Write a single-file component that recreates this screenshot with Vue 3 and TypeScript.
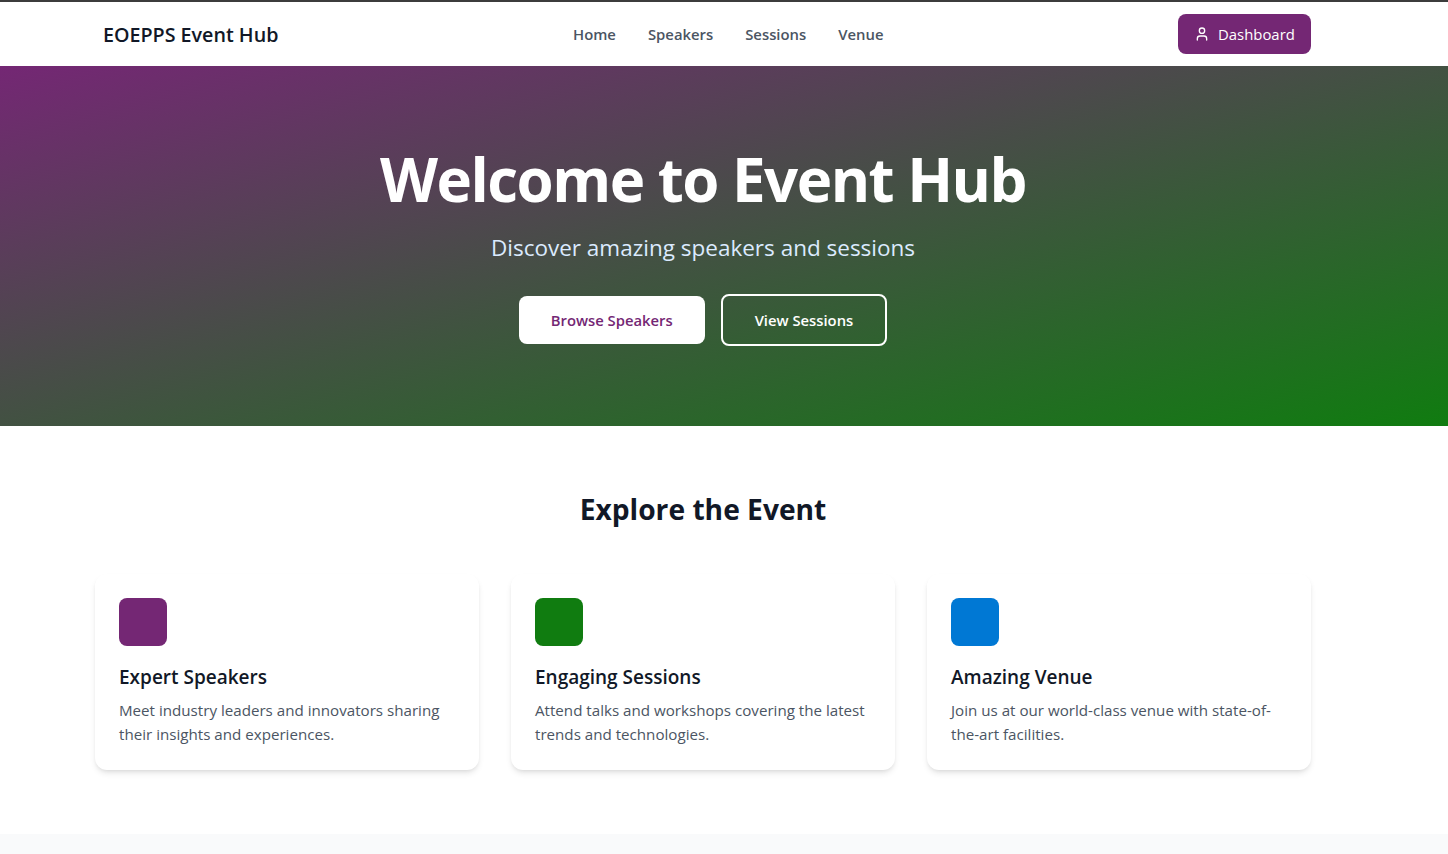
<script setup lang="ts">
interface Feature {
  title: string
  text: string
  color: string
}

const links: string[] = ['Home', 'Speakers', 'Sessions', 'Venue']

const features: Feature[] = [
  { title: 'Expert Speakers', text: 'Meet industry leaders and innovators sharing their insights and experiences.', color: '#742774' },
  { title: 'Engaging Sessions', text: 'Attend talks and workshops covering the latest trends and technologies.', color: '#107c10' },
  { title: 'Amazing Venue', text: 'Join us at our world-class venue with state-of-the-art facilities.', color: '#0078d4' }
]
</script>

<template>
  <div class="page">
    <header class="nav">
      <div class="nav-inner">
        <a class="logo">EOEPPS Event Hub</a>
        <nav class="links">
          <a v-for="link in links" :key="link" class="link">{{ link }}</a>
        </nav>
        <button class="dash">
          <svg width="16" height="16" viewBox="0 0 24 24" fill="none" stroke="currentColor" stroke-width="2" stroke-linecap="round" stroke-linejoin="round">
            <path d="M19 21v-2a4 4 0 0 0-4-4H9a4 4 0 0 0-4 4v2" />
            <circle cx="12" cy="7" r="4" />
          </svg>
          Dashboard
        </button>
      </div>
    </header>

    <section class="hero">
      <h1>Welcome to Event Hub</h1>
      <p>Discover amazing speakers and sessions</p>
      <div class="actions">
        <button class="btn primary">Browse Speakers</button>
        <button class="btn outline">View Sessions</button>
      </div>
    </section>

    <section class="explore">
      <h2>Explore the Event</h2>
      <div class="grid">
        <article v-for="f in features" :key="f.title" class="card">
          <div class="swatch" :style="{ background: f.color }"></div>
          <h3>{{ f.title }}</h3>
          <p>{{ f.text }}</p>
        </article>
      </div>
    </section>

    <footer class="foot"></footer>
  </div>
</template>

<style>
html, body { margin: 0; background: #fff; }
</style>

<style scoped>
.page {
  font-family: "Open Sans", "Noto Sans", sans-serif;
  height: 854px;
  overflow: hidden;
  border-top: 2px solid #3c3c3c;
  box-sizing: border-box;
  color: #111827;
}
.nav { background: #fff; height: 64px; padding-right: 42px; }
.nav-inner {
  max-width: 1216px;
  margin: 0 auto;
  height: 100%;
  display: flex;
  align-items: center;
  justify-content: space-between;
  padding-left: 8px;
  box-sizing: border-box;
}
.logo { font-size: 19.7px; font-weight: 600; color: #111827; }
.links { display: flex; gap: 32px; }
.link { font-size: 14.85px; font-weight: 600; color: #4b5563; }
.dash {
  font-family: inherit;
  display: flex;
  align-items: center;
  gap: 8px;
  width: 133px;
  height: 40px;
  padding: 0 16px;
  background: #742774;
  color: #fff;
  border: 0;
  border-radius: 8px;
  font-size: 14.9px;
  font-weight: 500;
  white-space: nowrap;
}
.hero {
  height: 360px;
  box-sizing: border-box;
  padding: 83px 42px 0 0;
  background: linear-gradient(to bottom right, #742774 0%, #107c10 100%);
  text-align: center;
}
.hero h1 { margin: 0; font-size: 60px; line-height: 60px; letter-spacing: -1.5px; font-weight: 700; color: #fff; }
.hero p { margin: 23px 0 0; font-size: 22.5px; line-height: 32px; color: #dbeafe; }
.actions { display: flex; justify-content: center; align-items: center; gap: 16px; margin-top: 30px; }
.btn { font-family: inherit; font-size: 14.8px; font-weight: 600; border-radius: 8px; padding: 0 32px; height: 48px; }
.primary { background: #fff; color: #742774; border: 0; }
.outline { background: transparent; color: #fff; border: 2px solid #fff; height: 52px; }
.explore { height: 408px; box-sizing: border-box; padding: 63px 42px 0 0; }
.explore h2 { margin: 0; text-align: center; font-size: 28.2px; line-height: 40px; font-weight: 700; }
.grid {
  max-width: 1216px;
  margin: 45px auto 0;
  display: grid;
  grid-template-columns: repeat(3, 1fr);
  gap: 32px;
}
.card {
  background: #fff;
  border-radius: 12px;
  padding: 24px;
  box-shadow: 0 4px 6px -1px rgba(0,0,0,.1), 0 2px 4px -2px rgba(0,0,0,.1);
}
.swatch { width: 48px; height: 48px; border-radius: 8px; }
.card h3 { margin: 17px 0 7px; font-size: 19px; line-height: 28px; font-weight: 600; color: #111827; }
.card p { margin: 0; font-size: 15.15px; line-height: 24px; color: #4b5563; }
.foot { height: 20px; background: #f9fafb; }
</style>
